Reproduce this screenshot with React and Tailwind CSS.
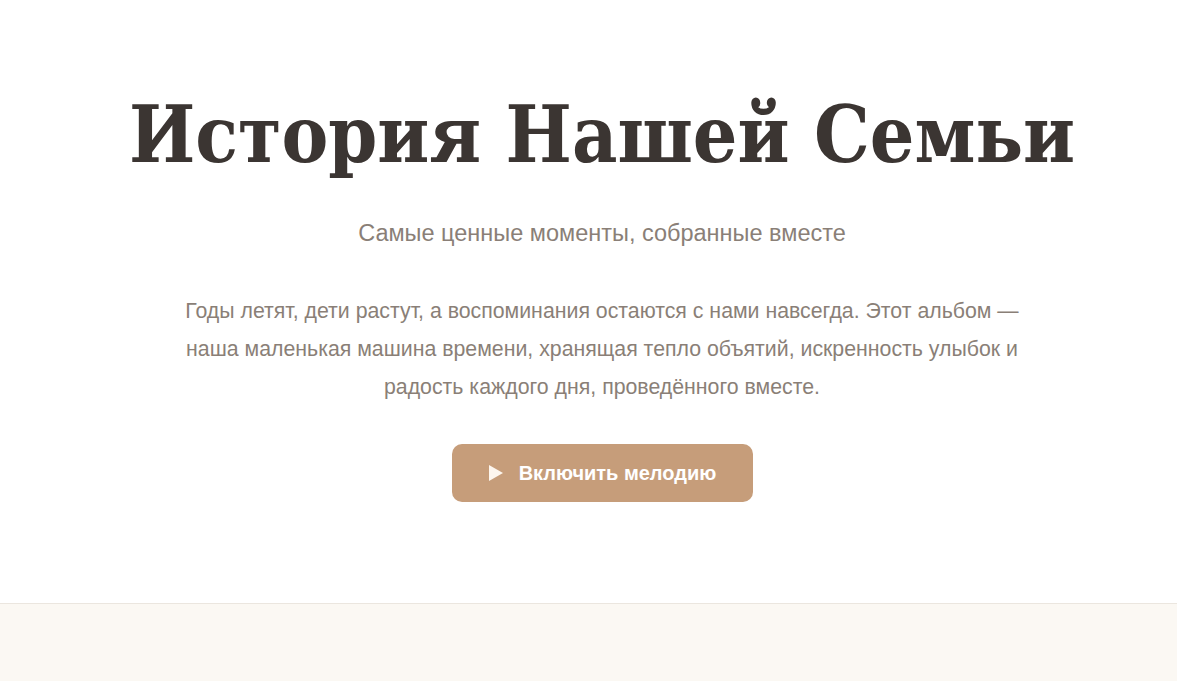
export default function App() {
  return (
    <div className="min-h-screen bg-white flex flex-col" style={{ fontFamily: '"Liberation Sans", Arial, sans-serif' }}>
      {/* hero */}
      <section className="flex flex-col items-center text-center pt-[84px] pl-[27px] h-[603px]">
        <h1 className="text-[78px] leading-[96px] pt-[3px] h-[96px] font-bold text-[#3b3532] font-stretch-condensed" style={{ fontFamily: '"DejaVu Serif", serif' }}>
          История Нашей Семьи
        </h1>
        <p className="mt-[38px] text-[23.5px] leading-[30px] text-[#8a7f77]">
          Самые ценные моменты, собранные вместе
        </p>
        <p className="mt-[44px] max-w-[850px] text-[21.3px] leading-[38px] text-[#8a7f77]">
          Годы летят, дети растут, а воспоминания остаются с нами навсегда. Этот альбом — наша маленькая машина времени, хранящая тепло объятий, искренность улыбок и радость каждого дня, проведённого вместе.
        </p>
        <button className="mt-[38px] w-[301px] h-[58px] rounded-[10px] bg-[#c69d7a] text-white font-bold text-[20px] flex items-center justify-center gap-[15px]">
          <svg width="16" height="18" viewBox="0 0 16 18"><path d="M1 1 L15 9 L1 17 Z" fill="#fdf6ee" /></svg>
          Включить мелодию
        </button>
      </section>

      {/* gallery */}
      <section className="flex-1 border-t border-[#ebe6df] bg-[#fbf8f3]"></section>
    </div>
  );
}
